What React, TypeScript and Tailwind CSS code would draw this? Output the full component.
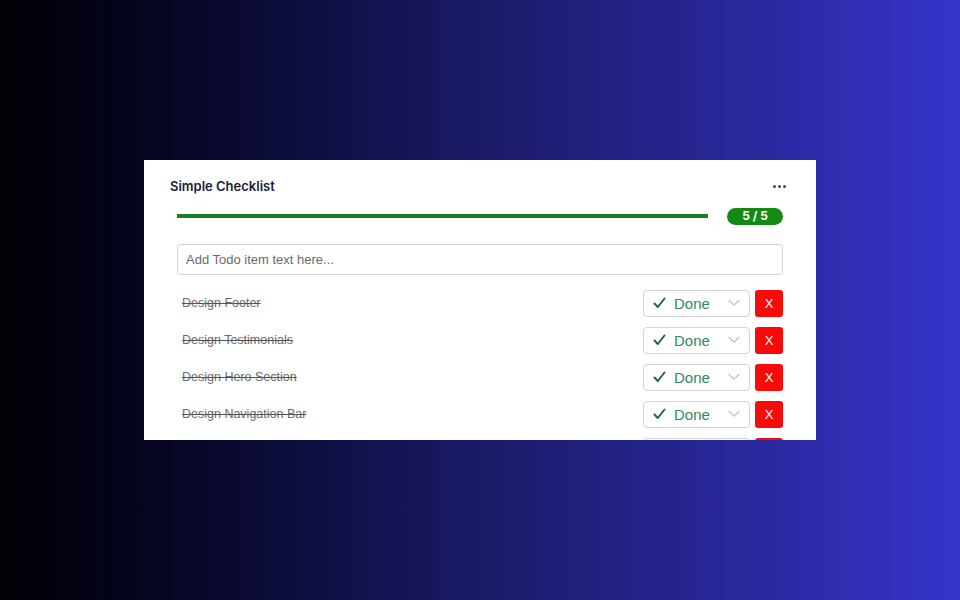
import React, { useState } from 'react'

type Todo = {
  id: number,
  text: string,
  done: boolean,
}

const initialTodos: Todo[] = [
  { id: 1, text: 'Design Footer', done: true },
  { id: 2, text: 'Design Testimonials', done: true },
  { id: 3, text: 'Design Hero Section', done: true },
  { id: 4, text: 'Design Navigation Bar', done: true },
  { id: 5, text: 'Design Layout', done: true },
]

const StatusSelect = () => {
  return (
    <div className="flex flex-row items-center w-[107px] h-[27px] border border-[#d4d4d8] rounded-[4px] bg-white pl-[9px] pr-[9px]">
      <svg width="13" height="12" viewBox="0 0 13 12" fill="none" className="shrink-0">
        <path d="M1.5 6.5 L4.8 10 L11.5 1.5" stroke="#1f6645" strokeWidth="2" strokeLinecap="round" strokeLinejoin="round" />
      </svg>
      <span className="ml-[8px] text-[15px] leading-none text-[#2f8a5e] font-['Liberation_Sans',Arial,sans-serif]">Done</span>
      <svg width="12" height="8" viewBox="0 0 12 8" fill="none" className="ml-auto shrink-0">
        <path d="M1 1.5 L6 6 L11 1.5" stroke="#c4c4c8" strokeWidth="1.4" strokeLinecap="round" strokeLinejoin="round" />
      </svg>
    </div>
  )
}

const TodoRow = ({ text, done }: Todo) => {
  return (
    <li className="flex flex-row items-center justify-between h-[27px]">
      <span className={`pl-[5px] text-[12.5px] text-[#6b6b6b] font-['Liberation_Sans',Arial,sans-serif] ${done ? 'line-through decoration-[#555]' : ''}`}>
        {text}
      </span>
      <div className="flex flex-row items-center gap-[5px]">
        <StatusSelect />
        <button className="w-[28px] h-[27px] rounded-[3px] bg-[#f90a0a] text-white text-[13px] leading-none font-['Liberation_Sans',Arial,sans-serif] flex items-center justify-center">
          X
        </button>
      </div>
    </li>
  )
}

const App = () => {
  const [todos] = useState(initialTodos)
  const doneCount = todos.filter(t => t.done).length

  return (
    <div className="w-full h-screen flex items-center justify-center bg-gradient-to-r from-[#010106] via-[#1b1a68] to-[#3634ca]">
      <div className="w-[672px] h-[280px] bg-white overflow-hidden flex flex-col">
        <div className="header flex flex-row items-center justify-between pl-[26px] pr-[30px] pt-[17px] h-[37px]">
          <h2 className="text-[13px] font-semibold text-[#17213b] font-['Inter',sans-serif]">Simple Checklist</h2>
          <div className="flex flex-row gap-[2px] items-center">
            <span className="w-[3px] h-[3px] rounded-full bg-[#444]" />
            <span className="w-[3px] h-[3px] rounded-full bg-[#444]" />
            <span className="w-[3px] h-[3px] rounded-full bg-[#444]" />
          </div>
        </div>
        <div className="px-[33px] flex flex-col">
          <div className="progress flex flex-row items-center mt-[11px] h-[17px] gap-[19px]">
            <div className="flex-1 h-[4px] bg-[#e5e7eb]">
              <div className="h-full bg-[#1a7d1f]" style={{ width: `${(doneCount / todos.length) * 100}%` }} />
            </div>
            <div className="w-[56px] h-[17px] rounded-full bg-[#148a14] text-white text-[12px] font-bold flex items-center justify-center font-['Inter',sans-serif]">
              {doneCount} / {todos.length}
            </div>
          </div>
          <input
            className="mt-[19px] h-[31px] w-full border border-[#d4d4d8] rounded-[3px] px-[8px] text-[13px] text-[#333] placeholder:text-[#6b6b6b] font-['Liberation_Sans',Arial,sans-serif] outline-none"
            placeholder="Add Todo item text here..."
          />
          <ul className="mt-[15px] flex flex-col gap-[10px]">
            {todos.map(t => <TodoRow key={t.id} {...t} />)}
          </ul>
        </div>
      </div>
    </div>
  )
}

export default App
